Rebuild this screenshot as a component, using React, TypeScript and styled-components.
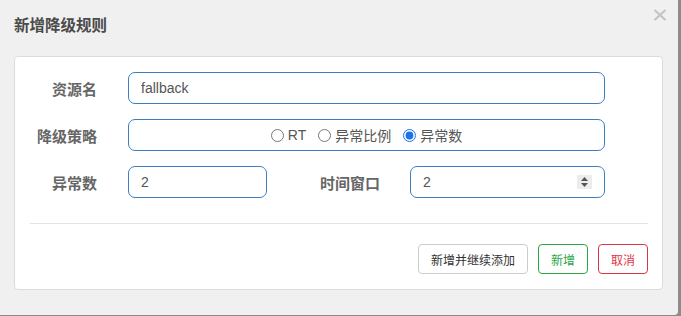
import React, { useState } from 'react'
import styled, { createGlobalStyle } from 'styled-components'

const GlobalStyle = createGlobalStyle`
    html, body {
        margin: 0;
        padding: 0;
        background: #8c8c8c;
    }
    * {
        box-sizing: border-box;
    }
`

const Modal = styled.div`
    width: 678px;
    height: 315px;
    background: #f0f0f0;
    border-bottom-right-radius: 4px;
    font-family: "Liberation Sans", "Noto Sans CJK SC", sans-serif;
    display: flex;
    flex-direction: column;
`

const Header = styled.div`
    height: 56px;
    padding: 14px 11px 0 14px;
    display: flex;
    justify-content: space-between;
    align-items: flex-start;
`

const Title = styled.div`
    font-size: 15.5px;
    line-height: 20px;
    font-weight: 700;
    color: #4a4a4a;
    font-family: "Noto Sans CJK SC", sans-serif;
`

const Close = styled.span`
    margin-top: -5px;
    display: flex;
`

const Card = styled.div`
    margin: 0 15px 0 14px;
    height: 234px;
    background: #fff;
    border: 1px solid #dcdcdc;
    border-radius: 4px;
    padding: 15px 14px 14px 0;
    display: flex;
    flex-direction: column;
`

const Rows = styled.div`
    display: flex;
    flex-direction: column;
    gap: 15px;
`

const Row = styled.div`
    display: flex;
    align-items: center;
    height: 32px;
`

const Label = styled.label<{ $width: number; $gap: number }>`
    width: ${p => p.$width}px;
    margin-right: ${p => p.$gap}px;
    text-align: right;
    font-size: 15px;
    font-weight: 700;
    color: #666;
    font-family: "Noto Sans CJK SC", sans-serif;
    flex-shrink: 0;
`

const Field = styled.div<{ $width: number; $center?: boolean }>`
    width: ${p => p.$width}px;
    height: 32px;
    border: 1px solid #3b7fc0;
    border-radius: 7px;
    display: flex;
    align-items: center;
    justify-content: ${p => (p.$center ? 'center' : 'flex-start')};
    padding: 0 12px 0 12px;
    flex-shrink: 0;
`

const Input = styled.input`
    flex: 1;
    min-width: 0;
    border: 0;
    outline: none;
    padding: 0;
    font-size: 14px;
    color: #555;
    font-family: "Liberation Sans", "Noto Sans CJK SC", sans-serif;
    background: transparent;
`

const Spinner = styled.div`
    width: 15px;
    height: 14px;
    background: #ececec;
    display: flex;
    align-items: center;
    justify-content: center;
`

const RadioItem = styled.label`
    display: flex;
    align-items: center;
    margin-right: 12px;
    font-size: 14px;
    color: #555;
    font-family: "Liberation Sans", "Noto Sans CJK SC", sans-serif;
    &:last-child {
        margin-right: 0;
    }
    & > input {
        margin: 0 4px 0 0;
        width: 13px;
        height: 13px;
        accent-color: #1a73e8;
    }
`

const Divider = styled.div`
    flex-shrink: 0;
    margin: 25px 0 0 15px;
    height: 1px;
    background: #e3e3e3;
`

const Footer = styled.div`
    display: flex;
    justify-content: flex-end;
    gap: 10px;
    margin-top: 20px;
`

const Button = styled.button<{ $color: string; $border: string; $width: number }>`
    width: ${p => p.$width}px;
    height: 30px;
    background: #fff;
    border: 1px solid ${p => p.$border};
    border-radius: 4px;
    color: ${p => p.$color};
    font-size: 12px;
    font-family: "Noto Sans CJK SC", sans-serif;
    padding: 0;
`

const options = ['RT', '异常比例', '异常数']

function App() {
    const [grade, setGrade] = useState('异常数')

    return (
        <Modal>
            <GlobalStyle />
            <Header>
                <Title>新增降级规则</Title>
                <Close>
                    <svg width='14' height='12' viewBox='0 0 14 12'>
                        <path d='M1.5 1 L12.5 11 M12.5 1 L1.5 11' stroke='#c4c4c4' strokeWidth='2.2' />
                    </svg>
                </Close>
            </Header>
            <Card>
                <Rows>
                    <Row>
                        <Label $width={82} $gap={31}>资源名</Label>
                        <Field $width={477}>
                            <Input defaultValue='fallback' />
                        </Field>
                    </Row>
                    <Row>
                        <Label $width={82} $gap={31}>降级策略</Label>
                        <Field $width={477} $center>
                            {options.map(o => (
                                <RadioItem key={o}>
                                    <input type='radio' checked={grade === o} onChange={() => setGrade(o)} />
                                    {o}
                                </RadioItem>
                            ))}
                        </Field>
                    </Row>
                    <Row>
                        <Label $width={82} $gap={31}>异常数</Label>
                        <Field $width={139}>
                            <Input defaultValue='2' />
                        </Field>
                        <Label $width={113} $gap={30}>时间窗口</Label>
                        <Field $width={195}>
                            <Input defaultValue='2' />
                            <Spinner>
                                <svg width='9' height='12' viewBox='0 0 9 12'>
                                    <path d='M4.5 1 L8 5 L1 5 Z' fill='#555' />
                                    <path d='M4.5 11 L8 7 L1 7 Z' fill='#555' />
                                </svg>
                            </Spinner>
                        </Field>
                    </Row>
                </Rows>
                <Divider />
                <Footer>
                    <Button $color='#333' $border='#cccccc' $width={110}>新增并继续添加</Button>
                    <Button $color='#28a745' $border='#28a745' $width={50}>新增</Button>
                    <Button $color='#dc3545' $border='#dc3545' $width={50}>取消</Button>
                </Footer>
            </Card>
        </Modal>
    )
}

export default App
